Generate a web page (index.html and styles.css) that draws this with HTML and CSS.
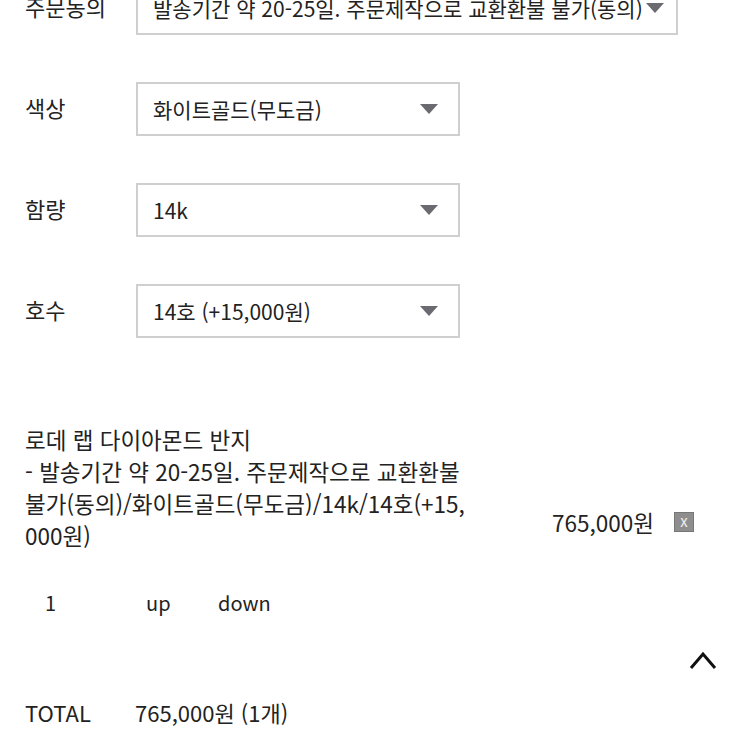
FILE: index.html
```html
<!DOCTYPE html>
<html lang="ko">
<head>
<meta charset="utf-8">
<link rel="stylesheet" href="styles.css">
</head>
<body>
<div class="page">
  <div class="options">
    <div class="opt-row">
      <div class="opt-label">주문동의</div>
      <div class="select select-wide"><span class="sel-text">발송기간 약 20-25일. 주문제작으로 교환환불 불가(동의)</span><span class="arrow"></span></div>
    </div>
    <div class="opt-row">
      <div class="opt-label">색상</div>
      <div class="select"><span class="sel-text">화이트골드(무도금)</span><span class="arrow"></span></div>
    </div>
    <div class="opt-row">
      <div class="opt-label">함량</div>
      <div class="select"><span class="sel-text">14k</span><span class="arrow"></span></div>
    </div>
    <div class="opt-row">
      <div class="opt-label">호수</div>
      <div class="select"><span class="sel-text">14호 (+15,000원)</span><span class="arrow"></span></div>
    </div>
  </div>

  <div class="item">
    <div class="item-info">
      <div class="item-name">로데 랩 다이아몬드 반지</div>
      <div class="item-desc">- 발송기간 약 20-25일. 주문제작으로 교환환불 불가(동의)/화이트골드(무도금)/14k/14호(+15,000원)</div>
    </div>
    <div class="item-price">
      <span>765,000원</span>
      <span class="del">x</span>
    </div>
  </div>

  <div class="qty">
    <span class="qty-num">1</span>
    <span class="qty-up">up</span>
    <span class="qty-down">down</span>
  </div>

  <div class="top-row">
    <svg class="chev" width="28" height="18" viewBox="0 0 28 18"><path d="M2 17 L14 3 L26 17" fill="none" stroke="#111" stroke-width="3"/></svg>
  </div>

  <div class="total">
    <span class="total-label">TOTAL</span>
    <span class="total-val">765,000원 (1개)</span>
  </div>
</div>
</body>
</html>
```
FILE: styles.css
```css
html, body {
  margin: 0;
  padding: 0;
  background: #fff;
}
body {
  font-family: "Noto Sans CJK KR", "Noto Sans", sans-serif;
  font-size: 22px;
  color: #222;
  overflow: hidden;
}
.page {
  padding-left: 25px;
  width: 725px;
}
.options {
  margin-top: -19px;
  display: flex;
  flex-direction: column;
  gap: 47px;
}
.opt-row {
  display: flex;
  align-items: center;
}
.opt-label {
  width: 111px;
  margin-top: -4px;
}
.select {
  box-sizing: border-box;
  width: 324px;
  height: 54px;
  border: 2px solid #cfcfcf;
  display: flex;
  align-items: center;
  padding-left: 15px;
  padding-right: 20px;
  white-space: nowrap;
  overflow: hidden;
  font-size: 21px;
}
.select-wide {
  width: 542px;
  padding-right: 20px;
}
.sel-text {
  flex: 1;
  overflow: hidden;
}
.select-wide .sel-text {
  flex: none;
}
.arrow {
  width: 0;
  height: 0;
  border-left: 9px solid transparent;
  border-right: 9px solid transparent;
  border-top: 10px solid #6a6a70;
  margin-left: 3px;
}
.item {
  margin-top: 85px;
  display: flex;
  font-size: 22.5px;
}
.item-info {
  width: 442px;
}
.item-name {
  line-height: 32px;
}
.item-desc {
  line-height: 32px;
  word-break: break-all;
}
.item-price {
  display: flex;
  align-items: center;
  margin-left: 85px;
  padding-top: 84px;
  height: 30px;
}
.del {
  box-sizing: border-box;
  width: 20px;
  height: 20px;
  margin-left: 20px;
  background: #8e8e8e;
  border: 1px solid #777;
  color: #eee;
  font-size: 15px;
  line-height: 16px;
  text-align: center;
}
.qty {
  margin-top: 37px;
  display: flex;
  line-height: 30px;
  font-size: 20px;
}
.qty-num {
  margin-left: 20px;
  width: 101px;
}
.qty-up {
  width: 72px;
}
.top-row {
  display: flex;
  justify-content: flex-end;
  padding-right: 33px;
  margin-top: 33px;
}
.chev {
  display: block;
}
.total {
  margin-top: 28px;
  display: flex;
  line-height: 30px;
}
.total-label {
  width: 110px;
}
```
